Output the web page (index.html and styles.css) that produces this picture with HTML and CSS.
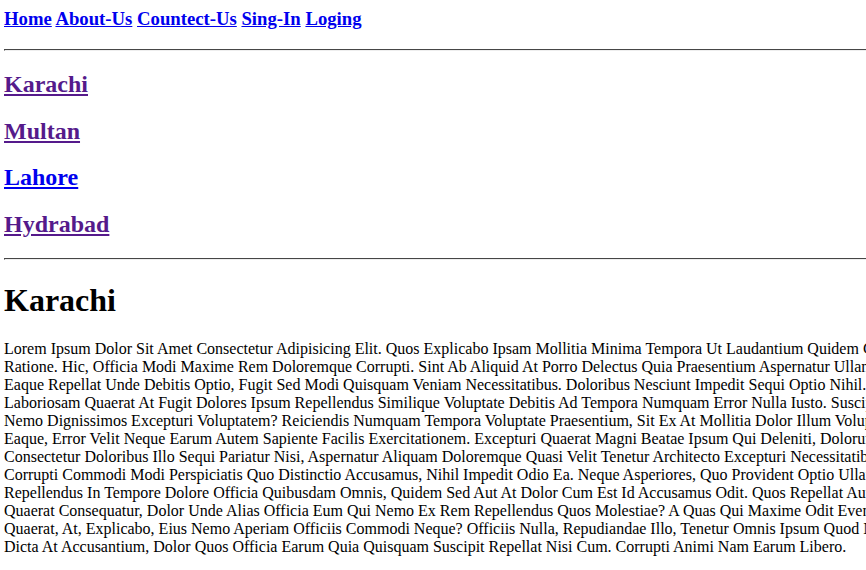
FILE: index.html
```html
<!DOCTYPE html>
<html>
<head>
<meta charset="utf-8">
<title>Cities</title>
<link rel="stylesheet" href="styles.css">
</head>
<body>
<div class="page">
  <h3 class="nav">
    <a href="#" class="link">Home</a>
    <a href="#" class="link">About-Us</a>
    <a href="#" class="link">Countect-Us</a>
    <a href="#" class="link">Sing-In</a>
    <a href="#" class="link">Loging</a>
  </h3>
  <hr class="rule">
  <h2 class="city"><a href="#" class="link visited">Karachi</a></h2>
  <h2 class="city"><a href="#" class="link visited">Multan</a></h2>
  <h2 class="city"><a href="#" class="link">Lahore</a></h2>
  <h2 class="city"><a href="#" class="link visited">Hydrabad</a></h2>
  <hr class="rule">
  <h1 class="title">Karachi</h1>
  <p class="text">Lorem Ipsum Dolor Sit Amet Consectetur Adipisicing Elit. Quos Explicabo Ipsam Mollitia Minima Tempora Ut Laudantium Quidem Culpa Nobis Eum Vitae<br>
Ratione. Hic, Officia Modi Maxime Rem Doloremque Corrupti. Sint Ab Aliquid At Porro Delectus Quia Praesentium Aspernatur Ullam Quas Harum<br>
Eaque Repellat Unde Debitis Optio, Fugit Sed Modi Quisquam Veniam Necessitatibus. Doloribus Nesciunt Impedit Sequi Optio Nihil. Amet Nobis Odit<br>
Laboriosam Quaerat At Fugit Dolores Ipsum Repellendus Similique Voluptate Debitis Ad Tempora Numquam Error Nulla Iusto. Suscipit Earum<br>
Nemo Dignissimos Excepturi Voluptatem? Reiciendis Numquam Tempora Voluptate Praesentium, Sit Ex At Mollitia Dolor Illum Voluptas Minus<br>
Eaque, Error Velit Neque Earum Autem Sapiente Facilis Exercitationem. Excepturi Quaerat Magni Beatae Ipsum Qui Deleniti, Dolorum Iure<br>
Consectetur Doloribus Illo Sequi Pariatur Nisi, Aspernatur Aliquam Doloremque Quasi Velit Tenetur Architecto Excepturi Necessitatibus Ab<br>
Corrupti Commodi Modi Perspiciatis Quo Distinctio Accusamus, Nihil Impedit Odio Ea. Neque Asperiores, Quo Provident Optio Ullam Rerum<br>
Repellendus In Tempore Dolore Officia Quibusdam Omnis, Quidem Sed Aut At Dolor Cum Est Id Accusamus Odit. Quos Repellat Aut Iste<br>
Quaerat Consequatur, Dolor Unde Alias Officia Eum Qui Nemo Ex Rem Repellendus Quos Molestiae? A Quas Qui Maxime Odit Eveniet Sint<br>
Quaerat, At, Explicabo, Eius Nemo Aperiam Officiis Commodi Neque? Officiis Nulla, Repudiandae Illo, Tenetur Omnis Ipsum Quod Nisi<br>
Dicta At Accusantium, Dolor Quos Officia Earum Quia Quisquam Suscipit Repellat Nisi Cum. Corrupti Animi Nam Earum Libero.</p>
</div>
</body>
</html>
```
FILE: styles.css
```css
html, body {
  margin: 0;
  padding: 0;
}
body {
  font-family: "Liberation Serif", "Times New Roman", serif;
  color: #000;
  background: #fff;
  overflow: hidden;
}
.page {
  width: 1100px;
  padding: 8px 8px 8px 4px;
}
.nav {
  font-size: 18.72px;
  font-weight: bold;
  margin: 0 0 18.72px 0;
}
.link {
  color: #0000ee;
  text-decoration: underline;
}
.link.visited {
  color: #551a8b;
}
.rule {
  border: 1px inset #eee;
  border-color: #9a9a9a #eee #eee #9a9a9a;
  margin: 8px 0;
  height: 0;
}
.city {
  font-size: 24px;
  font-weight: bold;
  margin: 19.92px 0;
}
.title {
  font-size: 32px;
  font-weight: bold;
  margin: 21.44px 0;
}
.text {
  font-size: 16px;
  margin: 16px 0;
  white-space: nowrap;
}
```
